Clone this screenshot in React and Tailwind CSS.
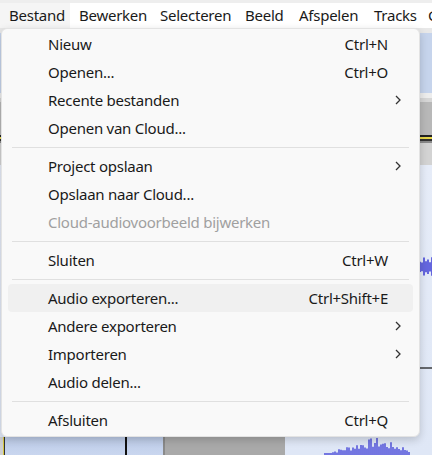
import React from 'react';

const FONT = { fontFamily: '"Noto Sans", "Open Sans", sans-serif' };

// widths taken so each title starts where the reference has it
const menubar = [
  ['Bestand', 'w-[70px]'],
  ['Bewerken', 'w-[81px]'],
  ['Selecteren', 'w-[85px]'],
  ['Beeld', 'w-[54px]'],
  ['Afspelen', 'w-[75px]'],
  ['Tracks', 'w-[54px]'],
  ['Genereren', 'w-[80px]'],
];

const groups = [
  [
    { label: 'Nieuw', key: 'Ctrl+N' },
    { label: 'Openen...', key: 'Ctrl+O' },
    { label: 'Recente bestanden', sub: true },
    { label: 'Openen van Cloud...' },
  ],
  [
    { label: 'Project opslaan', sub: true },
    { label: 'Opslaan naar Cloud...' },
    { label: 'Cloud-audiovoorbeeld bijwerken', disabled: true },
  ],
  [{ label: 'Sluiten', key: 'Ctrl+W' }],
  [
    { label: 'Audio exporteren...', key: 'Ctrl+Shift+E', active: true },
    { label: 'Andere exporteren', sub: true },
    { label: 'Importeren', sub: true },
    { label: 'Audio delen...' },
  ],
  [{ label: 'Afsluiten', key: 'Ctrl+Q' }],
];

function Chevron() {
  return (
    <svg width="6" height="10" viewBox="0 0 6 10">
      <path d="M1 1 L5 5 L1 9" fill="none" stroke="#333" strokeWidth="1.3" />
    </svg>
  );
}

function MenuItem({ item }) {
  return (
    <div
      className={`flex items-center h-[28px] mx-[6px] rounded-[4px] pl-[40px] pr-[12px] ${
        item.active ? 'bg-[#f0f0f0]' : ''
      } ${item.disabled ? 'text-[#a0a0a0]' : 'text-[#1a1a1a]'}`}
    >
      <span className="flex-1 whitespace-nowrap">{item.label}</span>
      {item.key && <span className="whitespace-nowrap">{item.key}</span>}
      <span className="w-[13px] flex justify-end">{item.sub && <Chevron />}</span>
    </div>
  );
}

// pseudo random spikes for the waveform drawing
function spikes(x0, x1, seed) {
  const out = [];
  let s = seed;
  for (let x = x0; x <= x1; x += 2) {
    s = (s * 9301 + 49297) % 233280;
    out.push({ x, r: s / 233280 });
  }
  return out;
}

function Waveform() {
  const bottom = spikes(325, 410, 7);
  const side = spikes(420, 432, 3);
  return (
    <svg className="absolute inset-0" width="432" height="290" viewBox="0 0 432 290">
      {side.map((p) => (
        <line key={'s' + p.x} x1={p.x} x2={p.x} y1={102 - 3 - p.r * 7} y2={102 + 3 + p.r * 6} stroke="#3a3ad6" strokeWidth="1.5" />
      ))}
      <line x1="420" x2="432" y1="203" y2="203" stroke="#111" strokeWidth="1.2" />
      {bottom.map((p) => {
        const peak = 1 - Math.abs(p.x - 375) / 55;
        const h = Math.max(2, peak * 18 * (0.4 + p.r * 0.6));
        return <line key={'b' + p.x} x1={p.x} x2={p.x} y1={290 - h} y2="290" stroke="#3a3ad6" strokeWidth="1.3" />;
      })}
    </svg>
  );
}

export default function App() {
  return (
    <div
      className="relative w-[432px] h-[455px] overflow-hidden bg-[#e4eaf7] text-[15px] tracking-[-0.25px]"
      style={FONT}
    >
      {/* menu bar */}
      <div className="h-[28px] bg-[#eeeeee] pt-[3px]">
        <div className="flex h-[25px] items-center bg-white whitespace-nowrap text-[#1a1a1a]">
          {menubar.map(([m, w], i) => (
            <div
              key={m}
              className={`${w} shrink-0 h-full flex items-center pl-[9px] ${i === 0 ? 'bg-[#f5f5f5]' : ''}`}
            >
              {m}
            </div>
          ))}
        </div>
      </div>

      {/* app body behind the menu */}
      <div className="flex flex-col h-[427px]">
        <div className="h-[5px] bg-[#e8e8e8]" />
        <div className="h-[60px] bg-[#c6d4ec]" />
        <div className="h-[5px] bg-[#ededed]" />
        <div className="h-[4px] bg-[#d6d6d6]" />
        <div className="h-[33px] bg-[#b8b8b8]" />
        <div className="h-[2px] bg-[#222]" />
        <div className="h-[2px] bg-[#e6d64a]" />
        <div className="h-[2px] bg-[#333]" />
        <div className="h-[2px] bg-[#8a8a8a]" />
        <div className="h-[22px] bg-[#d3d3d3]" />
        <div className="relative flex-1 flex flex-col justify-end bg-gradient-to-b from-[#e6ecf8] to-[#dfe7f6]">
          <Waveform />
          <div className="flex h-[18px]">
            <div className="w-[3px] bg-[#cfcfcf]" />
            <div className="w-[1px] bg-[#d8c840]" />
            <div className="w-[1px] bg-[#333]" />
            <div className="w-[120px] bg-gradient-to-b from-[#bccbe7] to-[#c9d6ef]" />
            <div className="w-[2px] bg-[#111]" />
            <div className="w-[36px] bg-gradient-to-b from-[#bccbe7] to-[#c9d6ef]" />
            <div className="w-[2px] bg-[#8a8a8a]" />
            <div className="w-[120px] bg-[#a9a9a9]" />
          </div>
        </div>
      </div>

      {/* dropdown */}
      <div className="absolute left-[1px] top-[28px] w-[419px] h-[409px] bg-[#f9f9f9] border border-[#e3e3e3] rounded-[6px] shadow-[0_3px_8px_rgba(0,0,0,0.18)] pt-[1px] pb-[2px]">
        {groups.map((g, gi) => (
          <div key={gi}>
            {gi > 0 && <div className="h-px bg-[#e0e0e0] mx-[10px] my-[4.5px]" />}
            {g.map((item) => (
              <MenuItem key={item.label} item={item} />
            ))}
          </div>
        ))}
      </div>
    </div>
  );
}
